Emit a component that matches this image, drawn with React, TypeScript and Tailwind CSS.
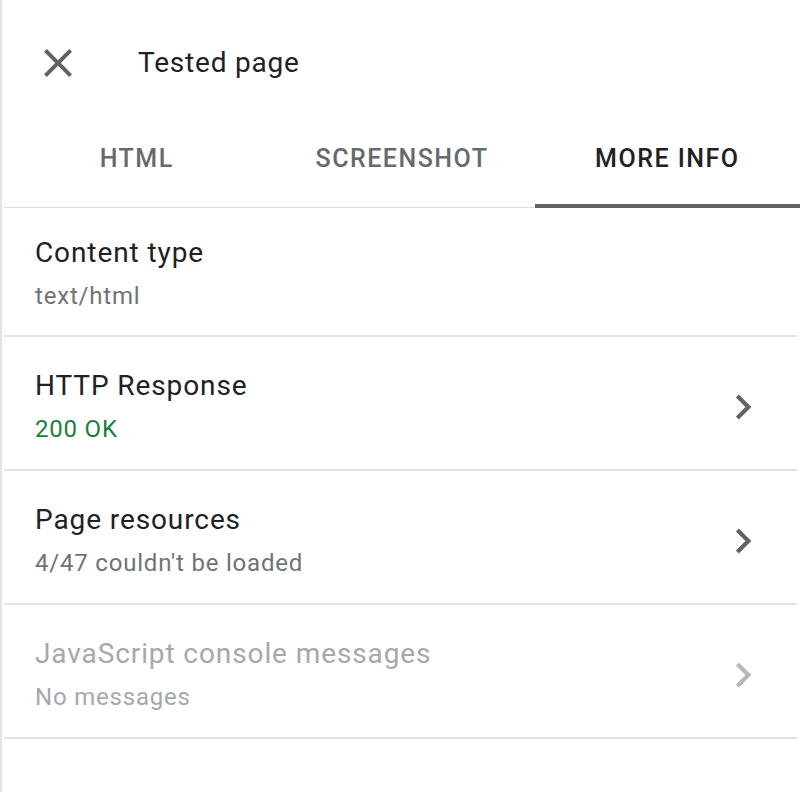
import { ReactNode } from 'react'

const CloseIcon = () => (
  <svg width="48" height="48" viewBox="0 0 24 24" fill="#5f6368">
    <path d="M19 6.41L17.59 5 12 10.59 6.41 5 5 6.41 10.59 12 5 17.59 6.41 19 12 13.41 17.59 19 19 17.59 13.41 12z" />
  </svg>
)

const Chevron = ({ color }: { color: string }) => (
  <svg width="50" height="50" viewBox="0 0 24 24" fill={color}>
    <path d="M10 6L8.59 7.41 13.17 12l-4.58 4.59L10 18l6-6z" />
  </svg>
)

const tabs = ['HTML', 'SCREENSHOT', 'MORE INFO']

type Row = {
  title: string
  sub: ReactNode
  subClass: string
  titleClass?: string
  chevron?: string
  first?: boolean
}

const rows: Row[] = [
  { title: 'Content type', sub: 'text/html', subClass: 'text-[#6f7378]', first: true },
  { title: 'HTTP Response', sub: '200 OK', subClass: 'text-[#188038]', chevron: '#5f6368' },
  { title: 'Page resources', sub: "4/47 couldn't be loaded", subClass: 'text-[#6f7378]', chevron: '#5f6368' },
  {
    title: 'JavaScript console messages',
    sub: 'No messages',
    subClass: 'text-[#a5a8ac]',
    titleClass: 'text-[#a5a8ac]',
    chevron: '#b5b8bc',
  },
]

export default function App() {
  return (
    <div className="flex h-[792px] w-[800px] bg-white font-['Roboto',sans-serif] overflow-hidden">
      <div className="w-[2px] shrink-0 bg-[#dfe4ea]" />
      <div className="ml-[2px] flex flex-1 flex-col">
        <div className="flex h-[108px] items-center pt-[18px]">
          <div className="ml-[30px]">
            <CloseIcon />
          </div>
          <h1 className="ml-[56px] text-[28px] tracking-[0.8px] text-[#202124]">Tested page</h1>
        </div>

        <div className="flex h-[100px] border-b border-[#e0e0e0]">
          {tabs.map((t, i) => (
            <div key={t} className="relative flex flex-1 items-center justify-center pt-[2px]">
              <span
                className={
                  i === 2
                    ? 'text-[25px] font-medium tracking-[1.5px] text-[#202124]'
                    : 'text-[25px] font-medium tracking-[1.5px] text-[#66696d]'
                }
              >
                {t}
              </span>
              {i === 2 && <div className="absolute bottom-[-1px] left-0 right-0 h-[4px] bg-[#5f6368]" />}
            </div>
          ))}
        </div>

        <div className="mr-[3px] flex flex-col">
          {rows.map((r) => (
            <div
              key={r.title}
              className={`flex items-center border-b-2 border-[#e3e3e3] ${r.first ? 'h-[129px]' : 'h-[134px]'}`}
            >
              <div className={`flex flex-1 flex-col pl-[31px] ${r.first ? 'pt-[3px]' : 'pt-[7px]'}`}>
                <div className={`text-[28px] leading-[34px] tracking-[0.9px] ${r.titleClass ?? 'text-[#202124]'}`}>
                  {r.title}
                </div>
                <div className={`mt-[11px] text-[24px] leading-[30px] tracking-[0.8px] ${r.subClass}`}>{r.sub}</div>
              </div>
              {r.chevron && (
                <div className="mr-[29px] mt-[8px]">
                  <Chevron color={r.chevron} />
                </div>
              )}
            </div>
          ))}
        </div>
      </div>
    </div>
  )
}
